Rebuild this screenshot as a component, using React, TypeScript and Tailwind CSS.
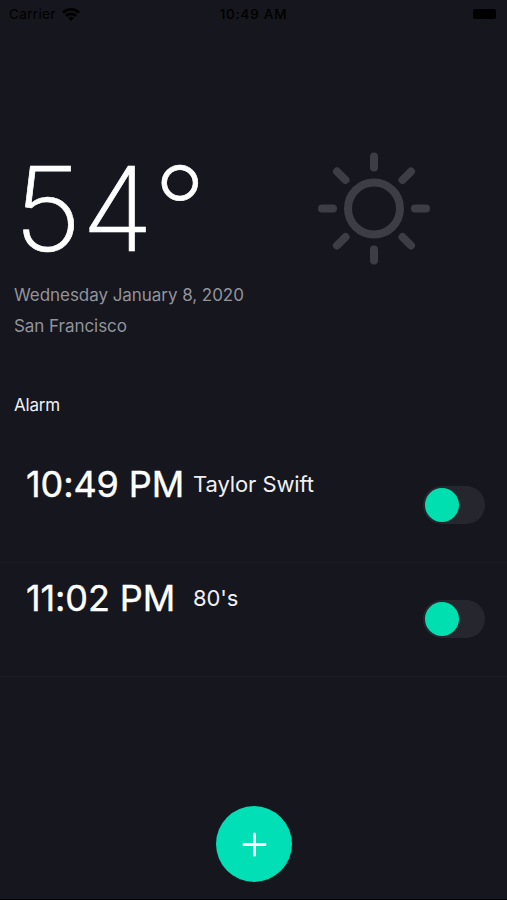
import { useState } from 'react';

type Alarm = {
  id: number;
  time: string;
  label: string;
};

const alarms: Alarm[] = [
  { id: 1, time: '10:49 PM', label: 'Taylor Swift' },
  { id: 2, time: '11:02 PM', label: "80's" },
];

function StatusBar() {
  return (
    <div className="relative flex h-7 items-center justify-between pl-[9px] pr-[11px] text-[13.5px] text-black">
      <div className="flex items-center gap-1.5">
        <span className="tracking-[0.35px]">Carrier</span>
        <svg width="18" height="13" viewBox="0 0 18 13" fill="none" stroke="currentColor" strokeWidth="2.9">
          <path d="M1 4.6a11.4 11.4 0 0 1 16 0" />
          <path d="M4 7.9a7.2 7.2 0 0 1 10 0" />
          <path d="M9 13 6.2 10.2a4 4 0 0 1 5.6 0Z" fill="currentColor" stroke="none" />
        </svg>
      </div>
      <span className="absolute left-1/2 -translate-x-1/2 whitespace-nowrap font-medium tracking-[0.8px]">10:49 AM</span>
      <div className="h-[10px] w-[23px] rounded-[2px] bg-black"></div>
    </div>
  );
}

function SunIcon() {
  return (
    <svg width="112" height="113" viewBox="0 -0.5 112 113" fill="none" stroke="#3d3d46" strokeWidth="8" strokeLinecap="round">
      <circle cx="56" cy="56" r="26" />
      <path d="M56 4v11M56 97v11M4 56h11M97 56h11" />
      <path d="M19 19l8.5 8.5M84.5 84.5l8.5 8.5M93 19l-8.5 8.5M27.5 84.5L19 93" />
    </svg>
  );
}

function Toggle() {
  const [on, setOn] = useState(false);

  return (
    <button
      onClick={() => setOn(!on)}
      className={`flex h-[38px] w-[62px] items-center rounded-full bg-[#26262e] px-0.5 ${on ? 'justify-end' : 'justify-start'}`}
    >
      <span className="size-[33.5px] rounded-full bg-[#00dfb0]"></span>
    </button>
  );
}

function AlarmRow({ alarm }: { alarm: Alarm }) {
  return (
    <div className="flex h-[114px] justify-between border-b border-[#191a22] pl-[26px] pr-[22px]">
      <div className="flex h-[70px] items-center">
        <span className="w-[167px] whitespace-nowrap text-[36px] font-normal tracking-[-0.1px] text-white [-webkit-text-stroke:0.4px_white]">{alarm.time}</span>
        <span className="pt-px text-[22px] tracking-[-0.1px] text-[#f0f0f2]">{alarm.label}</span>
      </div>
      <div className="pt-[37px]">
        <Toggle />
      </div>
    </div>
  );
}

export default function App() {
  return (
    <div className="flex h-[900px] w-[507px] flex-col overflow-hidden border-b border-black bg-[#15161e] font-['Inter',sans-serif]">
      <StatusBar />

      {/* Weather */}
      <div className="flex h-[252px] justify-between pl-[14px] pr-[77px] pt-[124px]">
        <div className="whitespace-nowrap text-[117px] font-extralight leading-[114px] text-white [-webkit-text-stroke:0.7px_white]">
          54<span className="inline-block">°</span>
        </div>
        <SunIcon />
      </div>
      <div className="pl-[14px] text-[17px] tracking-[-0.05px] text-[#93939a]">
        <p className="leading-[30px]">Wednesday January 8, 2020</p>
        <p className="pt-px leading-[30px]">San Francisco</p>
      </div>

      {/* Alarms */}
      <h2 className="mt-[49px] pl-[14px] text-[17px] leading-[30px] tracking-[-0.2px] text-[#f0f0f2]">Alarm</h2>
      <div className="mt-[29px]">
        {alarms.map((alarm) => (
          <AlarmRow key={alarm.id} alarm={alarm} />
        ))}
      </div>

      <div className="mt-auto flex justify-center pb-[17px] pl-px">
        <button className="flex size-[76px] items-center justify-center rounded-full bg-[#00dfb5] text-white">
          <svg width="25" height="25" viewBox="0 0 25 25" fill="none" stroke="currentColor" strokeWidth="3" strokeLinecap="round">
            <path d="M12.5 2v21M2 12.5h21" />
          </svg>
        </button>
      </div>
    </div>
  );
}
